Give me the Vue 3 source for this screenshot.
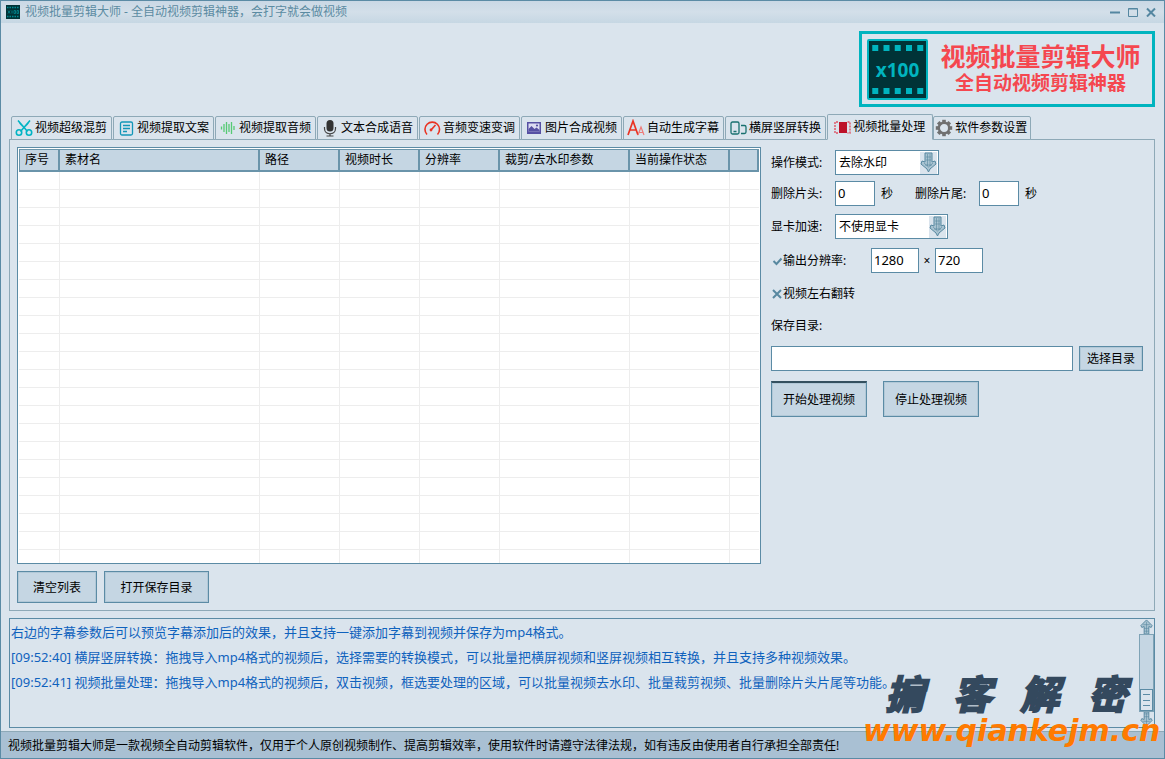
<script setup>
import { ref } from 'vue'

const tabs = [
  { icon: 'scissors', label: '视频超级混剪' },
  { icon: 'document', label: '视频提取文案' },
  { icon: 'wave', label: '视频提取音频' },
  { icon: 'mic', label: '文本合成语音' },
  { icon: 'gauge', label: '音频变速变调' },
  { icon: 'picture', label: '图片合成视频' },
  { icon: 'letters', label: '自动生成字幕' },
  { icon: 'screens', label: '横屏竖屏转换' },
  { icon: 'film', label: '视频批量处理' },
  { icon: 'gear', label: '软件参数设置' }
]
const activeTab = ref(8)
const columns = ['序号', '素材名', '路径', '视频时长', '分辨率', '裁剪/去水印参数', '当前操作状态', '']
const rowCount = 22
const gearTeeth = [0, 45, 90, 135, 180, 225, 270, 315]

const mode = ref('去除水印')
const gpu = ref('不使用显卡')
const head = ref('0')
const tail = ref('0')
const outW = ref('1280')
const outH = ref('720')
const resize = ref(true)
const flip = ref(false)
const dir = ref('')

const logs = [
  '右边的字幕参数后可以预览字幕添加后的效果，并且支持一键添加字幕到视频并保存为mp4格式。',
  '[09:52:40] 横屏竖屏转换：拖拽导入mp4格式的视频后，选择需要的转换模式，可以批量把横屏视频和竖屏视频相互转换，并且支持多种视频效果。',
  '[09:52:41] 视频批量处理：拖拽导入mp4格式的视频后，双击视频，框选要处理的区域，可以批量视频去水印、批量裁剪视频、批量删除片头片尾等功能。'
]
</script>

<template>
  <div class="window">
    <header class="titlebar">
      <svg class="app-icon" viewBox="0 0 14 14">
        <rect width="14" height="14" fill="#003337" />
        <path d="M1 2.500h12M1 11.500h12" stroke="#008c94" stroke-width="1.500" stroke-dasharray="1.500 1" />
        <path d="M2 5.500l2 3M4 5.500l-2 3M6 5.500v3M8 5.500h1.500v3H8zM11 5.500h1.500v3H11z" stroke="#008c94" stroke-width=".8" fill="none" />
      </svg>
      <h1 class="title">视频批量剪辑大师 - 全自动视频剪辑神器，会打字就会做视频</h1>
      <div class="window-buttons">
        <button type="button" aria-label="最小化"><svg viewBox="0 0 10 10"><path d="M0 5.500h10" /></svg></button>
        <button type="button" aria-label="最大化"><svg viewBox="0 0 10 10"><path class="thin" d="M.5 1.500h9v8h-9zM.5 2h9" /></svg></button>
        <button type="button" aria-label="关闭"><svg viewBox="0 0 10 10"><path d="M1 1.500l8 8M9 1.500l-8 8" /></svg></button>
      </div>
    </header>

    <div class="banner">
      <div class="brand">
        <svg class="brand-icon" viewBox="0 0 61 61">
          <rect x="1" y="1" width="59" height="59" rx="1" fill="#003337" stroke="#00b4bf" stroke-width="2" />
          <g fill="#00b4bf">
            <rect v-for="n in 5" :key="'t' + n" :x="n * 11.25 - 6" y="6" width="6" height="6" />
            <rect v-for="n in 5" :key="'b' + n" :x="n * 11.25 - 6" y="49" width="6" height="6" />
          </g>
          <text x="30.500" y="38" text-anchor="middle">x100</text>
        </svg>
        <div class="brand-text">
          <strong class="brand-name">视频批量剪辑大师</strong>
          <strong class="brand-sub">全自动视频剪辑神器</strong>
        </div>
      </div>
    </div>

    <nav class="tabs" role="tablist">
      <button
        v-for="(tab, i) in tabs"
        :key="tab.label"
        type="button"
        role="tab"
        class="tab"
        :class="{ active: i === activeTab }"
        :aria-selected="i === activeTab"
        @click="activeTab = i"
      >
        <svg class="tab-icon" viewBox="0 0 18 18">
          <g v-if="tab.icon === 'scissors'" fill="none" stroke="#00b4c4" stroke-width="1.600">
            <path d="M3 1.500l9.500 11M15 1.500l-9.500 11" /><path d="M3 1.500l2 4 3 3zM15 1.500l-2 4-3 3z" fill="#00b4c4" stroke="none" />
            <circle cx="4" cy="13.500" r="2.700" /><circle cx="14" cy="13.500" r="2.700" />
          </g>
          <g v-else-if="tab.icon === 'document'" fill="none" stroke="#1296b8" stroke-width="1.300">
            <rect x="3.500" y="3" width="12" height="13" rx="1.500" /><path d="M6 6.500h7M6 9.500h7M6 12.500h4" />
          </g>
          <path v-else-if="tab.icon === 'wave'" d="M2.500 7.500v3M5 5v8M7.500 3v12M10 5v8M12.500 3v12M15 7v4" stroke="#56ca75" stroke-width="1.300" />
          <g v-else-if="tab.icon === 'mic'">
            <rect x="5.500" y="1" width="7" height="11.500" rx="3.500" fill="#333" />
            <path d="M3.500 8v1.500c0 7 11 7 11 0V8M9 14.500v2.500M5.500 17h7" fill="none" stroke="#444" stroke-width="1.200" />
          </g>
          <g v-else-if="tab.icon === 'gauge'" fill="none" stroke="#e93323" stroke-width="1.600">
            <path d="M4 15.500A7.300 7.300 0 1 1 14.500 15.500" /><path d="M8 11l4.500-5" /><circle cx="8" cy="11" r=".6" />
          </g>
          <g v-else-if="tab.icon === 'picture'">
            <rect x="2" y="3" width="14" height="12" fill="#5650a3" /><rect x="3.500" y="4.500" width="11" height="8" fill="#dcdcf2" />
            <path d="M3.500 12.500V10l3-3 3 3 2-1.500 3 2.500v1.500z" fill="#5650a3" /><circle cx="12" cy="6.500" r="1.100" fill="#5650a3" />
          </g>
          <g v-else-if="tab.icon === 'letters'" fill="none">
            <path d="M1 16L6 2l5 14M3 11h6" stroke="#e93323" stroke-width="1.700" />
            <path d="M11 16l3-8 3 8M12 13.500h4" stroke="#ee7a78" stroke-width="1.200" />
          </g>
          <g v-else-if="tab.icon === 'screens'" fill="none" stroke="#18706f" stroke-width="1.300">
            <rect x="2" y="3" width="8" height="12" rx="1.500" /><path d="M4.500 12.500h3M12 6.500h3.500a1.500 1.500 0 0 1 1.500 1.500v5a1.500 1.500 0 0 1-1.500 1.500H12" />
          </g>
          <g v-else-if="tab.icon === 'film'">
            <rect x="6" y="4" width="8" height="11" fill="#bd1129" />
            <path d="M5 4H2v11h3M14.500 4H17v11h-2.500" fill="none" stroke="#dd5364" stroke-width="1.400" stroke-dasharray="2 1" />
          </g>
          <g v-else>
            <circle cx="9" cy="9" r="5.200" fill="none" stroke="#707070" stroke-width="2.400" />
            <rect v-for="a in gearTeeth" :key="a" x="7.200" y=".8" width="3.600" height="3" fill="#707070" :transform="'rotate(' + a + ' 9 9)'" />
          </g>
        </svg>
        <span>{{ tab.label }}</span>
      </button>
    </nav>

    <main class="panel">
      <section class="files">
        <div class="grid-box">
          <table class="grid">
            <colgroup>
              <col v-for="(c, i) in columns" :key="i" :class="'col-' + i" />
            </colgroup>
            <thead>
              <tr><th v-for="(c, i) in columns" :key="i" scope="col">{{ c }}</th></tr>
            </thead>
            <tbody>
              <tr v-for="r in rowCount" :key="r"><td v-for="(c, i) in columns" :key="i"></td></tr>
            </tbody>
          </table>
        </div>
        <div class="file-actions">
          <button type="button" class="btn clear">清空列表</button>
          <button type="button" class="btn open">打开保存目录</button>
        </div>
      </section>

      <form class="settings" @submit.prevent>
        <div class="row">
          <label class="name" for="mode">操作模式:</label>
          <div class="combo">
            <select id="mode" v-model="mode" class="short"><option>去除水印</option><option>裁剪视频</option></select>
            <svg class="arrow" viewBox="0 0 17 22"><path d="M5 1h7v9l3-1 1 3-6 5-1.500 3L7 17l-6-5 1-3 3 1z" /><path d="M7.500 2v12M10 2v12M6 5h5M6 8h5M4 11l4.500 4L13 11M5 13h7" /></svg>
          </div>
        </div>
        <div class="row">
          <label class="name" for="head">删除片头:</label>
          <input id="head" v-model="head" class="field tiny" type="text" /><span class="unit">秒</span>
          <label class="name second" for="tail">删除片尾:</label>
          <input id="tail" v-model="tail" class="field tiny" type="text" /><span class="unit">秒</span>
        </div>
        <div class="row">
          <label class="name" for="gpu">显卡加速:</label>
          <div class="combo">
            <select id="gpu" v-model="gpu" class="long"><option>不使用显卡</option><option>使用显卡</option></select>
            <svg class="arrow" viewBox="0 0 17 22"><path d="M5 1h7v9l3-1 1 3-6 5-1.500 3L7 17l-6-5 1-3 3 1z" /><path d="M7.500 2v12M10 2v12M6 5h5M6 8h5M4 11l4.500 4L13 11M5 13h7" /></svg>
          </div>
        </div>
        <div class="row">
          <label class="check wide">
            <input v-model="resize" type="checkbox" />
            <svg viewBox="0 0 12 12"><path v-if="resize" d="M2.500 6l3 3 5-5.500" /><path v-else d="M2 2l8 8M10 2l-8 8" /></svg>输出分辨率:
          </label>
          <input v-model="outW" class="field" type="text" aria-label="宽度" />
          <span class="times">×</span>
          <input v-model="outH" class="field" type="text" aria-label="高度" />
        </div>
        <div class="row text-row">
          <label class="check">
            <input v-model="flip" type="checkbox" />
            <svg viewBox="0 0 12 12"><path v-if="flip" d="M2.500 6l3 3 5-5.500" /><path v-else d="M2 2l8 8M10 2l-8 8" /></svg>视频左右翻转
          </label>
        </div>
        <div class="row text-row"><label class="name" for="dir">保存目录:</label></div>
        <div class="row dir-row">
          <input id="dir" v-model="dir" class="field grow" type="text" />
          <button type="button" class="btn choose">选择目录</button>
        </div>
        <div class="row run-row">
          <button type="submit" class="btn run start">开始处理视频</button>
          <button type="button" class="btn run">停止处理视频</button>
        </div>
      </form>
    </main>

    <section class="log">
      <div class="log-lines"><p v-for="line in logs" :key="line">{{ line }}</p></div>
      <div class="scrollbar">
        <svg class="scroll-arrow" viewBox="0 0 15 16"><path d="M7.500 1l6 6-1 2-2.500-1v8H5V8L2.500 9l-1-2z" /><path d="M5 10h5M5 13h5M7.500 3v12M4 6h7" /></svg>
        <div class="track"><div class="thumb"><i></i><i></i><i></i></div></div>
        <svg class="scroll-arrow" viewBox="0 0 15 16"><path d="M7.500 15l6-6-1-2-2.500 1V0H5v8L2.500 7l-1 2z" /><path d="M5 2h5M5 5h5M7.500 1v12M4 10h7" /></svg>
      </div>
    </section>

    <footer class="status">视频批量剪辑大师是一款视频全自动剪辑软件，仅用于个人原创视频制作、提高剪辑效率，使用软件时请遵守法律法规，如有违反由使用者自行承担全部责任!</footer>

    <div class="watermark">
      <div class="mark-name"><span>掮</span><span>客</span><span>解</span><span>密</span></div>
      <div class="mark-url">www.qiankejm.cn</div>
    </div>
  </div>
</template>

<style>
body { margin: 0; }
</style>

<style scoped>
* { box-sizing: border-box; }
.window {
  position: relative;
  display: flex;
  flex-direction: column;
  min-height: 100vh;
  border: 1px solid #5b8ba5;
  background: #dae4ed;
  color: #000;
  font-family: "Noto Sans", "Noto Sans CJK SC", sans-serif;
  font-size: 12px;
  line-height: 18px;
}
button, input, select { font: inherit; color: inherit; margin: 0; }

.titlebar {
  display: flex;
  align-items: center;
  height: 22px;
  padding: 0 8px 0 5px;
  background: linear-gradient(#cad8e5, #d3dfe9 50%, #c6d7e3);
}
.app-icon { width: 14px; height: 14px; margin-right: 5px; }
.title { flex: 1; margin: 0; font-size: 12px; font-weight: 400; color: #5b8ba2; }
.window-buttons { display: flex; gap: 8px; }
.window-buttons button { display: flex; width: 10px; height: 10px; padding: 0; border: 0; background: none; }
.window-buttons svg { width: 10px; height: 10px; fill: none; stroke: #5587a1; stroke-width: 2; }
.window-buttons .thin { stroke-width: 1; }

.banner { display: flex; justify-content: flex-end; padding: 8px 9px 7px; }
.brand { display: flex; align-items: center; width: 296px; height: 76px; padding: 0 5px; border: 3px solid #00b4bf; }
.brand-icon { width: 61px; height: 61px; }
.brand-icon text { fill: #00b4bf; font-size: 19px; font-weight: 700; }
.brand-text { flex: 1; display: flex; flex-direction: column; align-items: center; padding: 0 0 2px 6px; color: #f5474f; white-space: nowrap; }
.brand-name { font-size: 25px; line-height: 29px; }
.brand-sub { font-size: 19px; line-height: 24px; }

.tabs { position: relative; display: flex; align-items: flex-end; gap: 1px; padding-left: 10px; margin-bottom: -1px; }
.tab {
  display: flex;
  align-items: center;
  gap: 2px;
  height: 24px;
  padding: 0 4px 0 3px;
  border: 1px solid #8ea9b7;
  border-radius: 2px 2px 0 0;
  background: #dae4ed;
  white-space: nowrap;
}
.tab.active { height: 26px; padding: 0 7px 1px 5px; margin-right: -1px; border-bottom-color: #dae4ed; }
.tab:last-child { padding: 0 3px 0 1px; }
.tab-icon { width: 18px; height: 18px; flex: none; }

.panel {
  flex: 1;
  display: flex;
  gap: 10px;
  margin: 0 9px 0 8px;
  padding: 7px 11px 7px 7px;
  border: 1px solid #8ea9b7;
}
.files { flex: 1; display: flex; flex-direction: column; gap: 7px; min-width: 0; }
.grid-box { flex: 1 1 0; min-height: 416px; padding: 1px; border: 1px solid #5b8ba5; background: #fff; overflow: hidden; }
.grid { width: 100%; table-layout: fixed; border-collapse: separate; border-spacing: 0; }
.col-0 { width: 41px; }
.col-1 { width: 200px; }
.col-2, .col-3, .col-4 { width: 80px; }
.col-5 { width: 130px; }
.col-6 { width: 100px; }
.grid th {
  height: 23px;
  padding: 0 0 0 5px;
  border: 1px solid #6a94aa;
  border-left: 0;
  border-right-width: 2px;
  border-bottom-width: 2px;
  background: #c5d6e3;
  font-weight: 400;
  text-align: left;
  white-space: nowrap;
}
.grid th:first-child { border-left: 1px solid #6a94aa; }
.grid td { height: 18px; padding: 0; border-right: 1px solid #ededed; border-bottom: 1px solid #ededed; }
.grid td:last-child { border-right: 0; }
.file-actions { display: flex; gap: 7px; }

.btn {
  height: 32px;
  padding: 1px 0 0;
  border: 1px solid #5b8ba5;
  background: #c5d6e3;
  box-shadow: inset 0 0 0 1px #b1c8d7;
  white-space: nowrap;
}
.clear { width: 80px; }
.open { width: 105px; }

.settings { width: 372px; flex: none; padding-top: 3px; }
.row { display: flex; align-items: center; height: 25px; margin-bottom: 6px; }
.row:nth-child(2) { margin-bottom: 8px; }
.row:nth-child(3) { margin-bottom: 9px; }
.row:nth-child(4) { margin-bottom: 9px; }
.name { width: 64px; }
.unit { width: 12px; margin-left: 6px; }
.second { margin-left: 22px; }
.combo { position: relative; display: flex; }
.combo select {
  height: 25px;
  padding: 0 20px 0 3px;
  border: 1px solid #5b8ba5;
  border-radius: 0;
  background: #fff;
  appearance: none;
}
.short { width: 104px; }
.long { width: 113px; }
.arrow { position: absolute; right: 2px; top: 2px; width: 17px; height: 22px; background: #dae4ed; pointer-events: none; }
.arrow path, .scroll-arrow path { fill: #a9c3d1; stroke: #5788a0; stroke-width: 1; }
.arrow path + path, .scroll-arrow path + path { fill: none; stroke-width: .6; }
.field { width: 48px; height: 25px; padding: 0 2px 2px; border: 1px solid #5b8ba5; border-radius: 0; background: #fff; font-size: 13px; }
.tiny { width: 40px; }
.grow { flex: 1; }
.check { display: flex; align-items: center; }
.check input { position: absolute; width: 12px; height: 12px; opacity: 0; }
.check svg { width: 12px; height: 12px; fill: none; stroke: #5788a0; stroke-width: 2; }
.wide { width: 100px; }
.times { width: 16px; text-align: center; }
.text-row { height: 24px; margin-bottom: 8px; }
.dir-row { gap: 6px; margin-bottom: 10px; }
.choose { width: 64px; height: 25px; }
.run-row { gap: 16px; height: 36px; margin-bottom: 0; }
.run { width: 96px; height: 36px; }
.start { padding: 0; border-top: 2px solid #34505f; }

.log { display: flex; height: 110px; margin: 7px 9px 3px 8px; border: 1px solid #5b8ba5; }
.log-lines { flex: 1; padding: 1px; color: #0f62bd; font-size: 13px; line-height: 25px; overflow: hidden; white-space: nowrap; }
.log-lines p { margin: 0; }
.scrollbar { display: flex; flex-direction: column; width: 15px; }
.scroll-arrow { width: 15px; height: 15px; }
.track { flex: 1; display: flex; flex-direction: column; justify-content: flex-end; border: 1px solid #7fa3b6; background: #c5d6e3; }
.thumb { display: flex; flex-direction: column; justify-content: space-evenly; align-items: center; height: 22px; border: 1px solid #5b8ba5; background: #dae4ed; }
.thumb i { width: 7px; height: 1px; background: #5b8ba5; }

.status { height: 27px; padding: 0 7px; border-top: 1px solid #8ea9b7; background: #a9c0d3; line-height: 27px; white-space: nowrap; }

.watermark { position: absolute; right: 5px; bottom: 11px; width: 296px; pointer-events: none; font-style: italic; font-weight: 700; }
.mark-name { display: flex; justify-content: space-between; padding: 0 32px 0 22px; color: #34495e; font-size: 39px; line-height: 42px; -webkit-text-stroke: 2px #34495e; }
.mark-url { color: #ff7a00; font-family: "DejaVu Sans", sans-serif; font-size: 30px; line-height: 32px; white-space: nowrap; }
</style>
